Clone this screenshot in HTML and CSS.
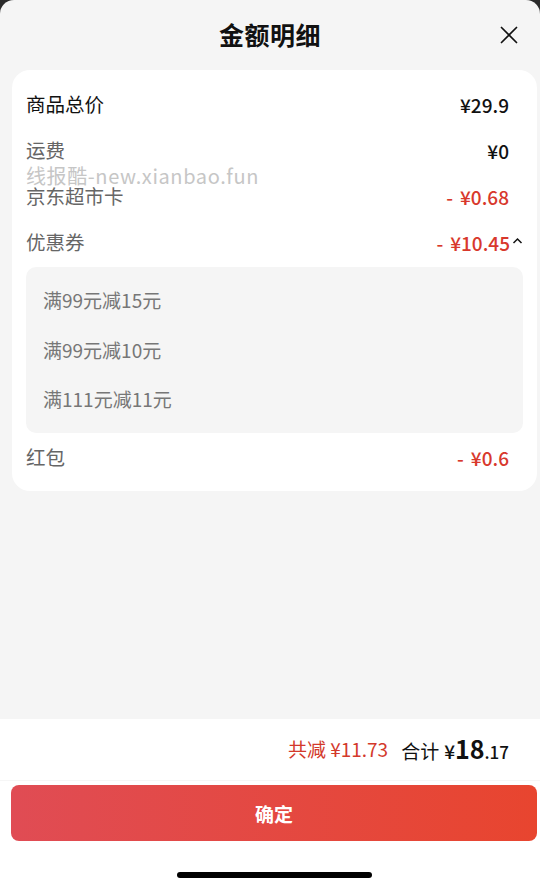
FILE: index.html
```html
<!DOCTYPE html>
<html lang="zh-CN">
<head>
<meta charset="utf-8">
<title>金额明细</title>
<link rel="stylesheet" href="styles.css">
</head>
<body>
<div class="sheet">
  <div class="content">
    <header class="header">
      <h1 class="title">金额明细</h1>
      <button class="close" aria-label="关闭">
        <svg width="18" height="18" viewBox="0 0 18 18"><path d="M1.5 1.5 L16.5 16.5 M16.5 1.5 L1.5 16.5" stroke="#111" stroke-width="1.7" fill="none" stroke-linecap="round"/></svg>
      </button>
    </header>
    <section class="card">
      <div class="watermark">线报酷-new.xianbao.fun</div>
      <div class="row">
        <span class="label label-main">商品总价</span>
        <span class="value">¥29.9</span>
      </div>
      <div class="row">
        <span class="label">运费</span>
        <span class="value">¥0</span>
      </div>
      <div class="row">
        <span class="label">京东超市卡</span>
        <span class="value red"><span class="minus">-</span>¥0.68</span>
      </div>
      <div class="row">
        <span class="label">优惠券</span>
        <span class="value red with-caret"><span class="minus">-</span>¥10.45<svg class="caret" width="11" height="7" viewBox="0 0 11 7"><path d="M1.5 6 L5.5 2 L9.5 6" stroke="#111" stroke-width="1.5" fill="none"/></svg></span>
      </div>
      <div class="coupons">
        <div class="coupon">满99元减15元</div>
        <div class="coupon">满99元减10元</div>
        <div class="coupon">满111元减11元</div>
      </div>
      <div class="row row-last">
        <span class="label">红包</span>
        <span class="value red"><span class="minus">-</span>¥0.6</span>
      </div>
    </section>
  </div>
  <footer class="footer">
    <div class="summary">
      <span class="saved">共减 ¥11.73</span>
      <span class="total">合计 <span class="yen">¥</span><span class="int">18</span><span class="dec">.17</span></span>
    </div>
    <div class="actions">
      <button class="confirm">确定</button>
    </div>
    <div class="home-bar"></div>
  </footer>
</div>
</body>
</html>
```

FILE: styles.css
```css
* { box-sizing: border-box; }
html, body { margin: 0; padding: 0; }
body {
  background: #2b2b2b;
  font-family: "Noto Sans CJK SC", "Noto Sans", sans-serif;
  color: #111;
}
.sheet {
  min-height: 889px;
  background: #f5f5f5;
  border-radius: 14px 14px 0 0;
  display: flex;
  flex-direction: column;
}
.content { flex: 1; }
.header {
  height: 70px;
  display: flex;
  align-items: center;
  justify-content: center;
  position: relative;
}
.title {
  margin: 0 0 2px;
  font-size: 25px;
  font-weight: 700;
  line-height: 1;
  color: #111;
  letter-spacing: 0.5px;
}
.close {
  position: absolute;
  right: 22px;
  top: 26px;
  width: 18px;
  height: 18px;
  padding: 0;
  border: 0;
  background: none;
  display: flex;
}
.card {
  position: relative;
  margin: 0 3px 0 12px;
  background: #fff;
  border-radius: 18px;
  padding: 11px 14px 11px 14px;
}
.watermark {
  position: absolute;
  left: 14px;
  top: 97px;
  font-size: 20px;
  line-height: 18px;
  letter-spacing: 0.6px;
  color: #c6c6c6;
  white-space: nowrap;
}
.row {
  height: 46px;
  display: flex;
  align-items: center;
  justify-content: space-between;
  padding-right: 14px;
}
.row-last { margin-top: 1px; }
.label {
  font-size: 19.5px;
  color: #666;
  line-height: 1;
}
.label-main { color: #111; }
.value {
  font-size: 19px;
  font-weight: 500;
  color: #111;
  line-height: 1;
  display: flex;
  align-items: center;
}
.red { color: #d8382c; }
.minus { margin-right: 7px; }
.with-caret { margin-right: -14px; }
.caret { margin-left: 2px; margin-top: -3px; }
.coupons {
  margin-top: 2px;
  background: #f5f5f5;
  border-radius: 10px;
  padding: 8px 17px 9.5px;
}
.coupon {
  height: 49.5px;
  display: flex;
  align-items: center;
  font-size: 19px;
  color: #777;
}
.footer {
  background: #fff;
}
.summary {
  height: 62px;
  display: flex;
  align-items: center;
  justify-content: flex-end;
  padding: 0 31px 3px 0;
  gap: 13px;
  border-bottom: 1px solid #f6f6f6;
}
.saved {
  font-size: 19px;
  color: #d3392b;
}
.total {
  font-size: 19px;
  color: #111;
  display: flex;
  align-items: baseline;
}
.yen { font-weight: 500; margin-left: 5px; }
.int { font-size: 25px; font-weight: 700; }
.dec { font-size: 17px; font-weight: 500; }
.actions {
  padding: 4px 3px 0 11px;
}
.confirm {
  width: 100%;
  height: 56px;
  border: 0;
  border-radius: 8px;
  background: linear-gradient(90deg, #e04c54, #e8452f);
  color: #fff;
  font-family: "Noto Sans CJK SC", sans-serif;
  font-size: 19px;
  font-weight: 700;
  display: block;
}
.home-bar {
  width: 195px;
  height: 6px;
  border-radius: 3px;
  background: #000;
  margin: 31px 0 11px 177px;
}
```
